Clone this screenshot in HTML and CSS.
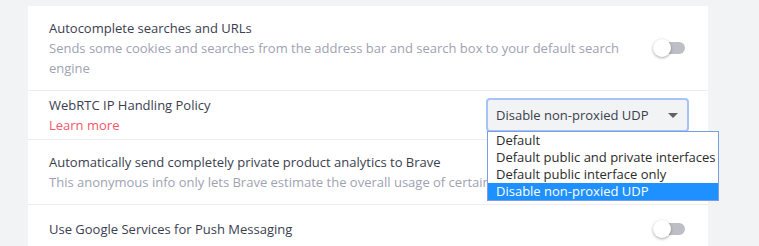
FILE: index.html
```html
<!DOCTYPE html>
<html lang="en">
<head>
  <meta charset="UTF-8" />
  <title>Privacy settings</title>
  <link rel="stylesheet" href="styles.css">
</head>
<body>
  <div class="page">
    <div class="card">
      <div class="row first">
        <div class="label">
          <div class="title">Autocomplete searches and URLs</div>
          <div class="desc">Sends some cookies and searches from the address bar and search box to your default search engine</div>
        </div>
        <div class="toggle"><span class="knob"></span></div>
      </div>
      <div class="row compact">
        <div class="label">
          <div class="title">WebRTC IP Handling Policy</div>
          <a class="link" href="#">Learn more</a>
        </div>
        <div class="select-wrap">
          <div class="select">
            <span>Disable non-proxied UDP</span>
            <svg class="arrow" width="10" height="5" viewBox="0 0 10 5"><path d="M0 0h10L5 5z" fill="#5f6368"/></svg>
          </div>
          <ul class="options">
            <li>Default</li>
            <li>Default public and private interfaces</li>
            <li>Default public interface only</li>
            <li class="selected">Disable non-proxied UDP</li>
          </ul>
        </div>
      </div>
      <div class="row">
        <div class="label">
          <div class="title">Automatically send completely private product analytics to Brave</div>
          <div class="desc">This anonymous info only lets Brave estimate the overall usage of certain features</div>
        </div>
        <div class="toggle"><span class="knob"></span></div>
      </div>
      <div class="row last">
        <div class="label">
          <div class="title">Use Google Services for Push Messaging</div>
        </div>
        <div class="toggle"><span class="knob"></span></div>
      </div>
    </div>
  </div>
</body>
</html>
```

FILE: styles.css
```css
body {
  margin: 0;
  background: #f1f3f5;
  font-family: "Open Sans", "Liberation Sans", sans-serif;
  font-size: 13px;
}
.page {
  box-sizing: border-box;
  height: 100vh;
  overflow: hidden;
  padding: 6px 51px 0 28px;
}
.card {
  background: #fff;
  min-height: 100%;
}
.row {
  display: flex;
  align-items: center;
  padding: 12px 23px 12px 21px;
  border-top: 1px solid #ebebf0;
}
.row.first {
  border-top: none;
}
.row.compact {
  padding-top: 4px;
  padding-bottom: 4px;
  min-height: 40px;
}
.row.last {
  padding-top: 14px;
}
.label {
  flex: 1;
  padding-right: 30px;
}
.title {
  color: #3b3e4f;
  line-height: 20px;
}
.desc {
  color: #a0a2b2;
  line-height: 20px;
}
.link {
  color: #f5566a;
  text-decoration: none;
  line-height: 20px;
}
.toggle {
  position: relative;
  width: 32px;
  height: 12px;
}
.toggle::before {
  content: "";
  position: absolute;
  left: 10px;
  right: 0;
  top: 0;
  bottom: 0;
  background: #bdbfc4;
  border-radius: 6px;
}
.knob {
  position: absolute;
  left: 0;
  top: -3px;
  width: 18px;
  height: 18px;
  border-radius: 50%;
  background: #fff;
  box-shadow: 0 1px 3px rgba(0, 0, 0, 0.35);
}
.select-wrap {
  position: relative;
  margin-right: -4px;
}
.select {
  box-sizing: border-box;
  width: 203px;
  height: 34px;
  background: #f1f3f4;
  border: 2px solid #a5c3f5;
  border-radius: 4px;
  display: flex;
  align-items: center;
  justify-content: space-between;
  padding: 0 9px 0 8px;
  color: #3b3e4f;
}
.options {
  position: absolute;
  left: 1px;
  top: 33px;
  margin: 0;
  padding: 0;
  list-style: none;
  background: #fff;
  border: 1px solid #7a9ce0;
  white-space: nowrap;
  z-index: 2;
}
.options li {
  color: #2b2b2b;
  line-height: 17px;
  padding: 0 2px 0 8px;
}
.options li.selected {
  background: #1e90ff;
  color: #fff;
}
```
